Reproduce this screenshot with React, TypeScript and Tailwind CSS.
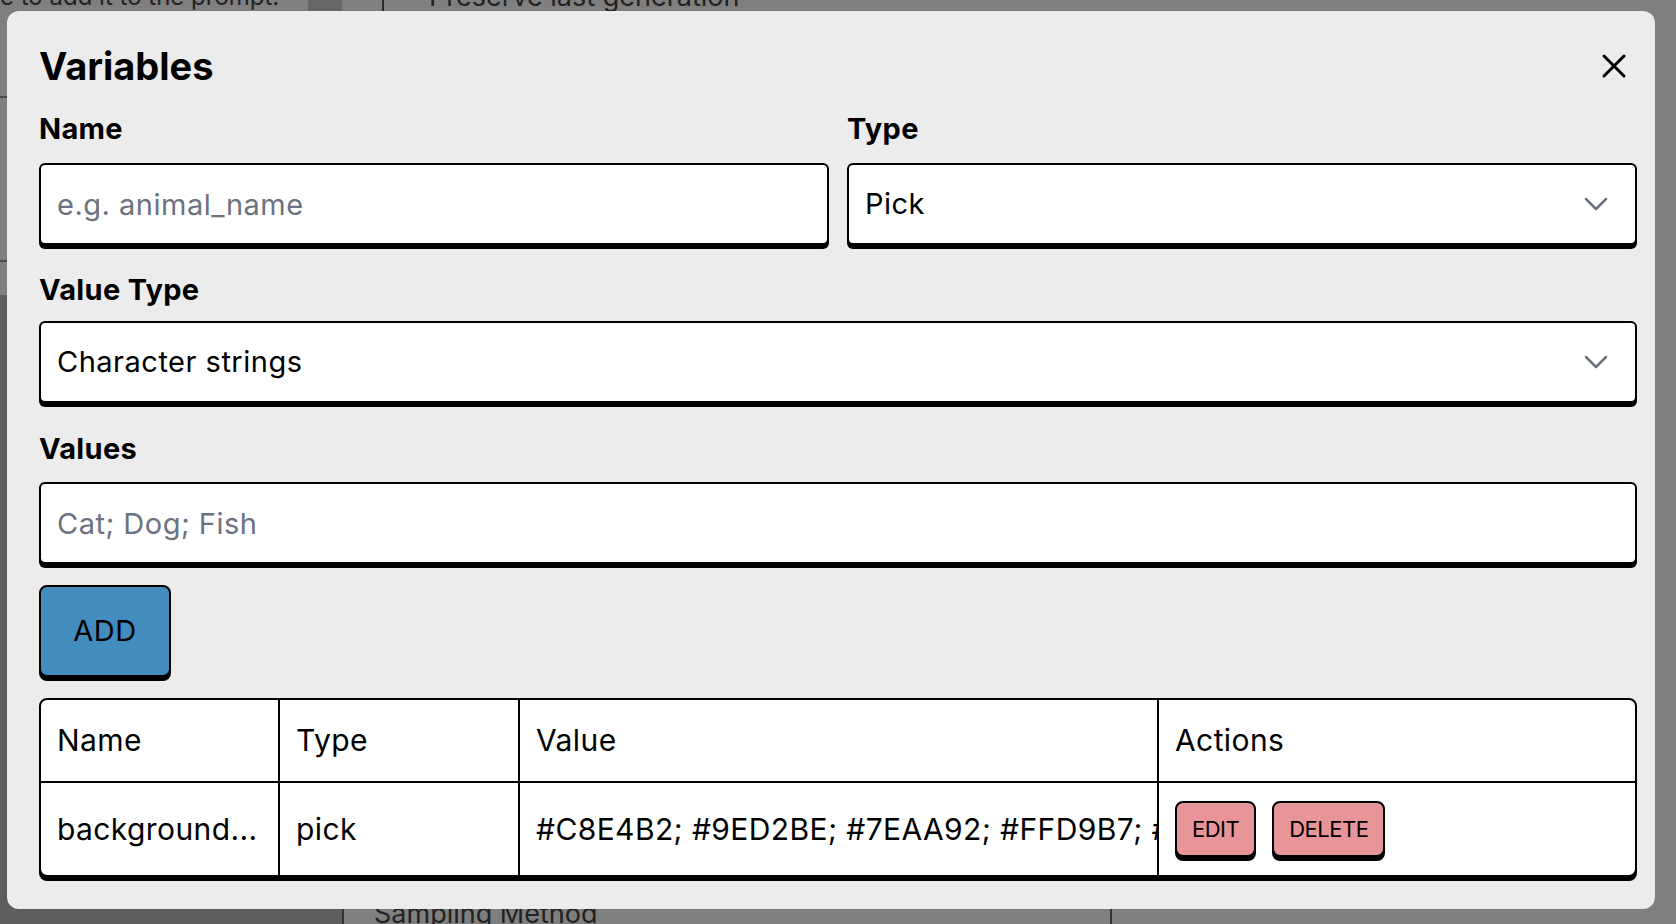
import { X } from "lucide-react";

function Chevron() {
  return (
    <svg width="24" height="14" viewBox="0 0 24 14" fill="none" className="shrink-0">
      <path d="M2 2L12 12L22 2" stroke="#6b7280" strokeWidth="2.5" strokeLinecap="round" strokeLinejoin="round" />
    </svg>
  );
}

function Label({ children }: { children: React.ReactNode }) {
  return <label className="block text-[29px] font-bold leading-[42px] tracking-[0.3px] text-black">{children}</label>;
}

const boxClass =
  "flex h-[82px] w-full items-center rounded-[6px] border-2 border-black bg-white px-4 text-[29px] tracking-[0.5px] text-black shadow-[0_4px_0_0_#000] outline-none";

function SelectBox({ value }: { value: string }) {
  return (
    <div className={`${boxClass} justify-between pr-[27px]`}>
      <span>{value}</span>
      <Chevron />
    </div>
  );
}

function ActionButton({ children }: { children: React.ReactNode }) {
  return (
    <button className="flex h-[56px] items-center rounded-[8px] border-2 border-black bg-[#e8959a] px-[15px] text-[22px] tracking-[-0.5px] shadow-[0_4px_0_0_#000]">
      {children}
    </button>
  );
}

const rows = [
  {
    name: "background_color",
    type: "pick",
    value: "#C8E4B2; #9ED2BE; #7EAA92; #FFD9B7; #F5F0BB; #C4DFDF",
  },
];

// the app page that sits behind the dialog, dimmed by the overlay
function BackPage() {
  return (
    <div className="flex h-full text-[27px] leading-[28px] text-[#444]">
      <div className="flex w-[342px] flex-col">
        <div className="flex h-[11px] items-end overflow-hidden">
          <div className="w-[308px] whitespace-nowrap text-[24px]">e to add it to the prompt.</div>
          <div className="h-full flex-1 bg-[#ccc]" />
        </div>
        <div className="h-[85px]" />
        <div className="h-[2px] w-[20px] bg-[#999]" />
        <div className="h-[162px]" />
        <div className="h-[2px] w-[20px] bg-[#999]" />
        <div className="h-[33px]" />
        <div className="flex-1 bg-[#bcbcbc]" />
      </div>
      <div className="flex flex-1 flex-col">
        <div className="flex h-[11px] items-end gap-[45px] overflow-hidden pl-[40px]">
          <div className="h-[11px] w-[2px] bg-[#555]" />
          <div className="whitespace-nowrap">Preserve last generation</div>
        </div>
        <div className="flex-1" />
        <div className="flex h-[24px] items-start overflow-hidden">
          <div className="h-full w-[2px] bg-[#666]" />
          <div className="w-[766px] whitespace-nowrap pl-[30px]">Sampling Method</div>
          <div className="h-full w-[2px] bg-[#666]" />
        </div>
      </div>
    </div>
  );
}

export default function App() {
  return (
    <div className="relative h-[924px] w-[1676px] overflow-hidden bg-white font-['Inter',sans-serif]">
      <BackPage />
      <div className="absolute inset-0 bg-black/50" />

      {/* dialog */}
      <div className="absolute left-[7px] top-[11px] w-[1648px] rounded-[12px] bg-[#ececec] pb-[32px] pl-[32px] pr-[18px] pt-[32px]">
        <div className="flex items-start justify-between">
          <h2 className="text-[38px] font-bold leading-[46px] text-black">Variables</h2>
          <button className="mr-[3px] mt-[3px] text-black">
            <X size={40} strokeWidth={1.8} />
          </button>
        </div>

        <div className="mt-[19px] grid grid-cols-2 gap-x-[18px]">
          <div>
            <Label>Name</Label>
            <input className={`${boxClass} mt-[13px] placeholder:text-[#6b7280]`} placeholder="e.g. animal_name" />
          </div>
          <div>
            <Label>Type</Label>
            <div className="mt-[13px]">
              <SelectBox value="Pick" />
            </div>
          </div>
        </div>

        <div className="mt-[24px]">
          <Label>Value Type</Label>
          <div className="mt-[10px]">
            <SelectBox value="Character strings" />
          </div>
        </div>

        <div className="mt-[25px]">
          <Label>Values</Label>
          <input className={`${boxClass} mt-[12px] placeholder:text-[#6b7280]`} placeholder="Cat; Dog; Fish" />
        </div>

        <button className="mt-[21px] flex h-[92px] w-[132px] items-center justify-center rounded-[8px] border-2 border-black bg-[#428dbe] text-[29px] tracking-[0.5px] text-black shadow-[0_4px_0_0_#000]">
          ADD
        </button>

        <div className="mt-[21px] overflow-hidden rounded-[8px] border-2 border-black bg-white shadow-[0_4px_0_0_#000]">
          <table className="w-full table-fixed border-collapse text-left text-[30px] tracking-[0.4px] text-black">
            <colgroup>
              <col className="w-[238px]" />
              <col className="w-[240px]" />
              <col className="w-[639px]" />
              <col />
            </colgroup>
            <thead>
              <tr className="h-[82px] border-b-2 border-black">
                <th className="border-r-2 border-black px-4 font-normal">Name</th>
                <th className="border-r-2 border-black px-4 font-normal">Type</th>
                <th className="border-r-2 border-black px-4 font-normal">Value</th>
                <th className="px-4 font-normal">Actions</th>
              </tr>
            </thead>
            <tbody>
              {rows.map((r) => (
                <tr key={r.name} className="h-[93px]">
                  <td className="truncate border-r-2 border-black px-4">{r.name.slice(0, 10)}...</td>
                  <td className="border-r-2 border-black px-4">{r.type}</td>
                  <td className="overflow-hidden whitespace-nowrap border-r-2 border-black pl-4">{r.value}</td>
                  <td className="px-4">
                    <div className="flex items-center gap-4">
                      <ActionButton>EDIT</ActionButton>
                      <ActionButton>DELETE</ActionButton>
                    </div>
                  </td>
                </tr>
              ))}
            </tbody>
          </table>
        </div>
      </div>
    </div>
  );
}
